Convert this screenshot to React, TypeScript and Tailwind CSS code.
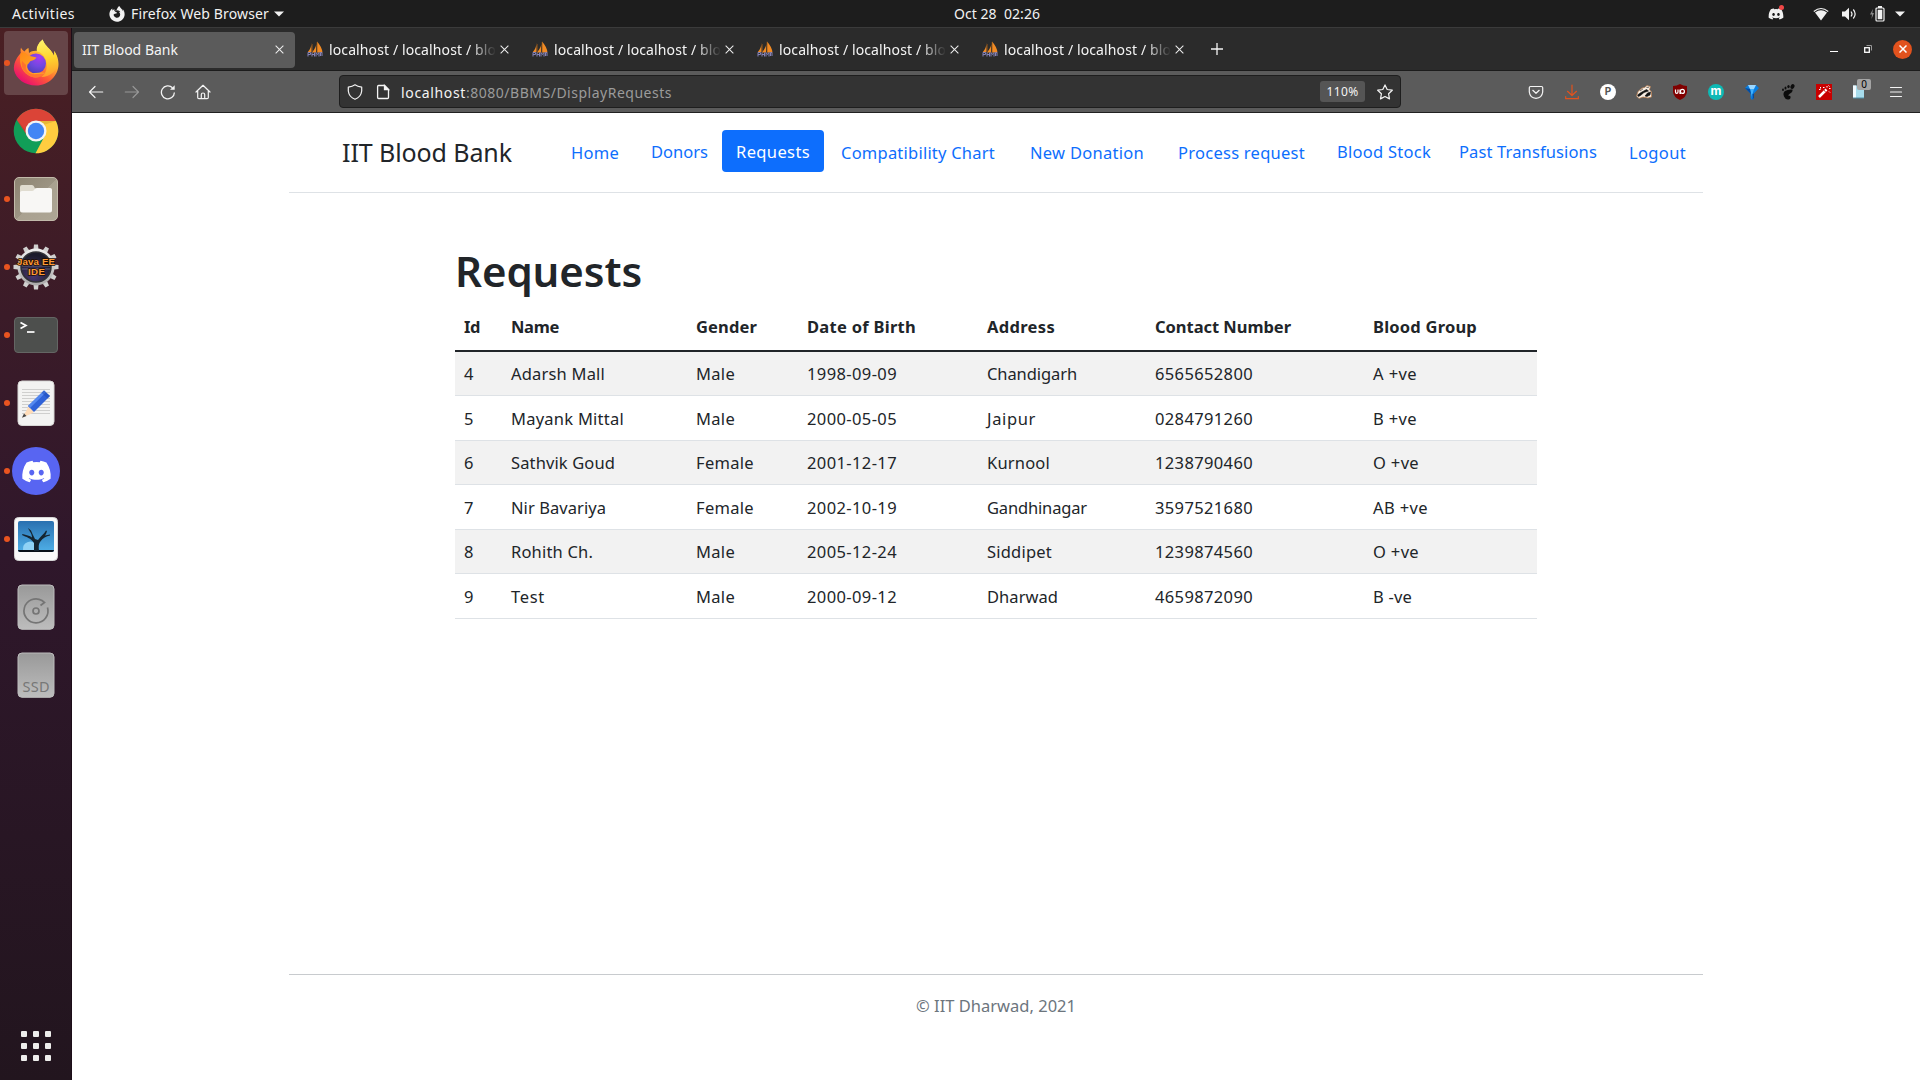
import { useLayoutEffect, useRef, useState } from "react";
import type { ReactNode } from "react";
import { FaDiscord, FaFirefoxBrowser } from "react-icons/fa";

/** Single-line label whose tracking is adjusted so that it fills a given width. */
function Fit({ w, children, className = "" }: { w: number; children: string; className?: string }) {
  const ref = useRef<HTMLSpanElement>(null);
  const [spacing, setSpacing] = useState(0);
  useLayoutEffect(() => {
    if (ref.current) {
      const natural = ref.current.getBoundingClientRect().width;
      setSpacing((w - natural) / children.length);
    }
  }, [w, children]);
  return (
    <span ref={ref} className={`inline-block whitespace-pre ${className}`} style={{ letterSpacing: spacing }}>
      {children}
    </span>
  );
}

/* ---------- dock icons ---------- */

const FirefoxIcon = () => (
  <svg viewBox="0 0 48 48" className="size-12">
    <defs>
      <linearGradient id="ffBody" x1="0.85" y1="0.1" x2="0.25" y2="0.95">
        <stop offset="0" stopColor="#fff44f" />
        <stop offset="0.35" stopColor="#ffb02e" />
        <stop offset="0.65" stopColor="#ff5a36" />
        <stop offset="1" stopColor="#e8106e" />
      </linearGradient>
      <radialGradient id="ffGlobe" cx="0.65" cy="0.2" r="0.9">
        <stop offset="0" stopColor="#a63cf0" />
        <stop offset="0.5" stopColor="#7148e0" />
        <stop offset="1" stopColor="#4a3fb5" />
      </radialGradient>
      <linearGradient id="ffTail" x1="0.5" y1="0" x2="0.6" y2="1">
        <stop offset="0" stopColor="#fff36a" />
        <stop offset="0.5" stopColor="#ffd52e" />
        <stop offset="1" stopColor="#ff9a2c" />
      </linearGradient>
      <linearGradient id="ffHead" x1="0" y1="0" x2="1" y2="1">
        <stop offset="0" stopColor="#ff8a16" />
        <stop offset="1" stopColor="#ffb52e" />
      </linearGradient>
    </defs>
    <path d="M9 8.500C8.300 11 8.600 13 8.800 14C3.500 20 1.500 25 2 31C4 40 13 46.500 24 46.500C37 46.500 46.500 36.500 46.500 25C46.500 19 44 14 42 12C42.500 14 42.300 16 42 17C40 12 37 10 35 7.500C32 4 31 2 30.800.500C26 4 25 9 25.300 12C22 11.500 19 12.500 17 14L16.500 9C14.500 10 13 11.500 12.500 12.500C10.500 11 9.500 10 9 8.500Z" fill="url(#ffBody)" />
    <path d="M30.800.500C26 4 24 9 25 12.500C29 13 33 17 34 22C36 29 34 35 29 38C39 38 46 31 45.500 22C45 17 43 13 42 12C42.500 14 42.300 16 42 17C40 12 37 10 35 7.500C32 4 31 2 30.800.500Z" fill="url(#ffTail)" />
    <circle cx="24" cy="24.500" r="10" fill="url(#ffGlobe)" />
    <path d="M8.800 14C12 13 14 14 16 16.500C18.500 17.500 22 17.500 24.500 18.500C24 20 21 21.500 18.500 22C17 24 16.500 25 15.500 25.500C14 31 19 35 23 34C27 33.500 30 33 33.500 34C29 39 21 40 16 36C9 32 6.500 22 8.800 14Z" fill="url(#ffHead)" />
    <path d="M14 26C13 32 18 36 25 35C29 34.300 31 35 33.500 34C29 39.500 20 40.500 13.500 34C10 30 9 26 10 22Z" fill="#ff5b34" opacity=".65" />
  </svg>
);

const ChromeIcon = () => (
  <svg viewBox="0 0 48 48" className="size-12">
    <circle cx="24" cy="24" r="22.300" fill="#119e58" />
    <path d="M4.700 12.850A22.300 22.300 0 0 1 43.300 12.850L43.800 14H24A10 10 0 0 0 15.340 29Z" fill="#db4437" />
    <path d="M24 14H43.900A22.300 22.300 0 0 1 23.500 46.300L32.660 29Z" fill="#ffcd40" />
    <path d="M24 14H43.900L33 17.500ZM15.300 29L4.900 12.600L14 24Z" fill="#000" opacity=".1" />
    <circle cx="24" cy="24" r="10.500" fill="#f4f4f4" />
    <circle cx="24" cy="24" r="8.200" fill="#4285f4" />
  </svg>
);

const FilesIcon = () => (
  <svg viewBox="0 0 48 48" className="size-12">
    <defs>
      <linearGradient id="fileBg" x1="0" y1="0" x2="1" y2="1">
        <stop offset="0" stopColor="#8c8371" />
        <stop offset="0.5" stopColor="#9c9483" />
        <stop offset="0.51" stopColor="#a9a190" />
        <stop offset="1" stopColor="#aea695" />
      </linearGradient>
    </defs>
    <rect x="2.500" y="2.500" width="43" height="43" rx="4.500" fill="url(#fileBg)" stroke="#c2baaa" />
    <path d="M8 12Q8 10 10 10H20Q21.500 10 22 11.500L23 13.500H38Q40 13.500 40 15.500V20H8Z" fill="#e0dcd0" />
    <path d="M8 17.500Q8 16 10 16H20Q21.500 16 22 15Q23 13 25 13H38Q40 13 40 15V35.500Q40 37.500 38 37.500H10Q8 37.500 8 35.500Z" fill="#f8f7f5" />
  </svg>
);

const teeth = [0, 30, 60, 90, 120, 150, 180, 210, 240, 270, 300, 330];
const EclipseIcon = () => (
  <svg viewBox="0 0 48 48" className="size-12">
    <defs>
      <linearGradient id="eclGear" x1="0" y1="0" x2="0" y2="1">
        <stop offset="0" stopColor="#eeeeee" />
        <stop offset="1" stopColor="#aaa9a9" />
      </linearGradient>
      <radialGradient id="eclCore" cx=".4" cy=".8" r=".7">
        <stop offset="0" stopColor="#47366f" />
        <stop offset="1" stopColor="#1b1b2b" />
      </radialGradient>
    </defs>
    {teeth.map((a) => (
      <path key={a} d="M21.300 8L22 1.500H26L26.700 8Z" fill="#d0d0cf" transform={`rotate(${a} 24 24)`} />
    ))}
    <circle cx="24" cy="24" r="18.500" fill="url(#eclGear)" />
    <circle cx="24" cy="24" r="15" fill="url(#eclCore)" stroke="#303036" strokeWidth="1.500" />
    <path d="M10 23H38M10 26H38" stroke="#6e6e85" strokeWidth=".8" />
    <g fontFamily="Liberation Sans" fontWeight="700" fontSize="9.700" textAnchor="middle" fill="#ff9a37" stroke="#1c0c00" strokeWidth="1.300" paintOrder="stroke">
      <text x="24" y="21.500" textLength="38">Java EE</text>
      <text x="24.500" y="31.500" textLength="17">IDE</text>
    </g>
  </svg>
);

const TerminalIcon = () => (
  <svg viewBox="0 0 48 48" className="size-12">
    <rect x="2.500" y="6.500" width="43" height="35" rx="3.500" fill="#4d4f4d" stroke="#646664" />
    <path d="M8.500 11.500L14 14.500L8.500 17.500" fill="none" stroke="#fff" strokeWidth="1.700" />
    <path d="M15 21H22.500" stroke="#fff" strokeWidth="1.700" />
  </svg>
);

const EditorIcon = () => (
  <svg viewBox="0 0 48 48" className="size-12">
    <rect x="6" y="2" width="36" height="44.500" rx="4" fill="#f3f3f2" stroke="#d7d7d5" />
    <path d="M10 10.500H38M10 13.500H38M10 16.500H38M10 19.500H38M10 22.500H38M10 25.500H38M10 28.500H38M10 31.500H38M10 34.500H38" stroke="#cfcfce" />
    <path d="M14.500 31.500L16.500 27L22 33L17.500 35.500L10 38.500Z" fill="#ffdcb8" />
    <path d="M10 38.700L12 34.500L14.500 37Z" fill="#444" />
    <path d="M16 27L32 11.500L38 17L22 33Z" fill="#2f62d8" />
    <path d="M16 27L32 11.500L34 13.200L18 29Z" fill="#5488ef" />
    <path d="M32 11.500L38 17L35.500 19.400L29.700 13.800Z" fill="#1c4bb8" opacity=".5" />
  </svg>
);

const DiscordIcon = () => (
  <div className="flex size-12 items-center justify-center rounded-full bg-[#5865f2] text-white">
    <FaDiscord className="size-[31px]" />
  </div>
);

const PhotoIcon = () => (
  <svg viewBox="0 0 48 48" className="size-12">
    <defs>
      <linearGradient id="sky" x1="0" y1="0" x2="0" y2="1">
        <stop offset="0" stopColor="#2a70b0" />
        <stop offset="1" stopColor="#4fb0e8" />
      </linearGradient>
    </defs>
    <rect x="2.500" y="2.500" width="43" height="43" rx="4" fill="#f9f9f9" stroke="#d6d6d6" />
    <rect x="6" y="6" width="36" height="31" rx="2" fill="url(#sky)" />
    <path d="M11 35A7.500 7.500 0 0 1 24 29V35Z" fill="#8fd2f5" />
    <path d="M6 35H42Q42 37 40 37H8Q6 37 6 35Z" fill="#081018" />
    <path d="M22 36V28C19 23 14 22 10 20L10.500 19C14 20 18 20.500 20 22.500C20 18 17 16 16 13L19 15.500L20.500 19L23 24L26 25C29 21 32 19 34 15.500L35 16C34.500 18 34 19 33 20.500L38 19.500V20.500C34 21 31 23 28 27C26.500 29 26.500 32 27 36Z" fill="#152430" />
  </svg>
);

const DiskIcon = ({ ssd }: { ssd?: boolean }) => (
  <svg viewBox="0 0 48 48" className="size-12">
    <defs>
      <linearGradient id="disk" x1="0" y1="0" x2="0" y2="1">
        <stop offset="0" stopColor="#999" />
        <stop offset="1" stopColor="#bdbdbd" />
      </linearGradient>
    </defs>
    <rect x="6" y="2" width="36" height="44.300" rx="4" fill="url(#disk)" stroke="#bcbcbc" />
    {ssd ? (
      <text x="24" y="40.500" fontFamily="Noto Sans" fontSize="14.500" textAnchor="middle" textLength="27" fill="#777">
        SSD
      </text>
    ) : (
      <g fill="none" stroke="#757575" strokeWidth="1.700">
        <path d="M35.500 24.500A12 12 0 1 1 30 17.500L32.500 19.500L28.500 22.500" />
        <circle cx="24" cy="28" r="3" />
      </g>
    )}
  </svg>
);

const dock: { icon: ReactNode; running?: boolean; active?: boolean }[] = [
  { icon: <FirefoxIcon />, running: true, active: true },
  { icon: <ChromeIcon /> },
  { icon: <FilesIcon />, running: true },
  { icon: <EclipseIcon />, running: true },
  { icon: <TerminalIcon />, running: true },
  { icon: <EditorIcon />, running: true },
  { icon: <DiscordIcon />, running: true },
  { icon: <PhotoIcon />, running: true },
  { icon: <DiskIcon /> },
  { icon: <DiskIcon ssd /> },
];

function Dock() {
  return (
    <aside className="flex w-[72px] shrink-0 flex-col items-start border-r border-[#1c0d18] bg-linear-to-b from-[#4a1f23] via-[#2f172b] to-[#22151e] pt-[3px] pl-1">
      <div className="flex flex-col gap-1">
        {dock.map((d, i) => (
          <div key={i} className={`relative flex size-16 items-center justify-center rounded-[4px] ${d.active ? "bg-[#664548]" : ""}`}>
            {d.running && <span className="absolute top-[29px] left-0 size-1.5 rounded-full bg-[#e95420]" />}
            {d.icon}
          </div>
        ))}
      </div>
      <div className="mt-auto mb-[19px] ml-[17px] grid grid-cols-3 gap-1.5">
        {teeth.slice(0, 9).map((k) => (
          <span key={k} className="size-1.5 rounded-[1px] bg-[#eeeeec]" />
        ))}
      </div>
    </aside>
  );
}

/* ---------- top bar ---------- */

const Caret = () => (
  <svg viewBox="0 0 10 6" className="h-1.5 w-2.5">
    <path d="M0 .5H10L5 5.500Z" fill="#f2f2f2" />
  </svg>
);

function TopBar() {
  return (
    <header className="grid h-7 grid-cols-3 items-center border-b border-[#3b3b3b] bg-[#1d1d1d] text-[14px] text-[#f2f2f2]">
      <div className="flex items-center pl-3">
        <Fit w={63}>Activities</Fit>
        <FaFirefoxBrowser className="ml-[34px] size-4" />
        <Fit w={138} className="ml-1.5">Firefox Web Browser</Fit>
        <span className="ml-[5px]"><Caret /></span>
      </div>
      <div className="flex pb-px pl-[314px]">
        <Fit w={86}>Oct 28  02:26</Fit>
      </div>
      <div className="flex items-center justify-end pr-[15px]">
        <span className="relative">
          <FaDiscord className="size-4" />
          <span className="absolute -top-px right-0 size-[5px] rounded-full bg-[#f04747]" />
        </span>
        <svg viewBox="0 0 16 14" className="ml-[29px] h-3.5 w-4">
          <path d="M.8 4.500Q8-1.500 15.200 4.500" fill="none" stroke="#f2f2f2" strokeWidth="1.200" />
          <path d="M2 5.500Q8 1 14 5.500L8 13.500Z" fill="#f2f2f2" />
        </svg>
        <svg viewBox="0 0 16 14" className="ml-3 h-3.5 w-4">
          <path d="M1 4.500H4L8 .7V13.300L4 9.500H1Z" fill="#f2f2f2" />
          <path d="M10 4.500Q12 7 10 9.500" fill="none" stroke="#f2f2f2" strokeWidth="1.200" />
          <path d="M12.300 2.500Q16 7 12.300 11.500" fill="none" stroke="#f2f2f2" strokeWidth="1.200" />
        </svg>
        <svg viewBox="0 0 16 16" className="ml-3 size-4">
          <path d="M4 3L1 8.500H3L2.500 13L5 7H3.300Z" fill="#8a8a8a" />
          <rect x="7" y="2" width="8" height="13" rx="1" fill="none" stroke="#f2f2f2" strokeWidth="1.200" />
          <path d="M9 0H13V2H9ZM8.700 3.700H13.300V13.300H8.700Z" fill="#f2f2f2" />
        </svg>
        <span className="ml-2.5 flex"><Caret /></span>
      </div>
    </header>
  );
}

/* ---------- browser chrome ---------- */

const Cross = () => (
  <svg viewBox="0 0 10 10" className="size-[9px]">
    <path d="M.7.700L9.300 9.300M9.300.700L.7 9.300" stroke="#eee" strokeWidth="1.150" />
  </svg>
);

const SailFavicon = () => (
  <svg viewBox="0 0 16 16" className="size-4 shrink-0">
    <path d="M4.500 1.500Q4.500 7 .8 11H4.500ZM9.500 0Q10 6 4.800 11.500H9ZM10 .5Q10 6 10 11.500H15.500Q15 6 10 .5Z" fill="#f08a24" />
    <path d="M5.500 3V10M10 1V11" stroke="#7d4a18" strokeWidth=".7" />
    <path d="M1 15.500V11.500H3.500V13.500H1M5 15.500V11.500M7.500 15.500V11.500M5 13.500H7.500M9 15.500V11.500L10.500 13.500L12 11.500V15.500M13.500 15V11.500H15V15" fill="none" stroke="#8583b8" />
  </svg>
);

function Tabs() {
  return (
    <div className="flex h-[43px] items-center border-b border-[#1c1c1c] bg-[#2b2b2b] pr-2 pl-0.5 text-[14px] text-[#f4f4f4]">
      <div className="mt-px flex h-9 w-[221px] items-center justify-between rounded-[4px] bg-[#5b5b5b] pr-[11px] pl-2">
        <Fit w={96}>IIT Blood Bank</Fit>
        <Cross />
      </div>
      <div className="ml-3 flex">
        {[0, 1, 2, 3].map((i) => (
          <div key={i} className="flex w-[225px] items-center">
            <SailFavicon />
            <div className="ml-1.5 w-[167px] mask-r-from-85% mask-r-to-100%">
              <Fit w={167}>localhost / localhost / blo</Fit>
            </div>
            <span className="ml-1"><Cross /></span>
          </div>
        ))}
      </div>
      <svg viewBox="0 0 12 12" className="ml-1 size-3">
        <path d="M6 0V12M0 6H12" stroke="#f4f4f4" strokeWidth="1.300" />
      </svg>
      <div className="ml-auto flex items-center">
        <span className="mt-1 h-px w-2 bg-white" />
        <svg viewBox="0 0 8 8" className="ml-[26px] size-2">
          <path d="M2.500.500H7.500V5.500" fill="none" stroke="#999" />
          <rect x=".7" y="2.700" width="4.600" height="4.600" fill="none" stroke="#fff" strokeWidth="1.300" />
        </svg>
        <span className="ml-[21px] flex size-[19px] items-center justify-center rounded-full bg-[#e2521d]">
          <svg viewBox="0 0 8 8" className="size-2">
            <path d="M.5.500L7.500 7.500M7.500.500L.5 7.500" stroke="#fff" strokeWidth="1.500" />
          </svg>
        </span>
      </div>
    </div>
  );
}

const Line = ({ d, className = "" }: { d: string; className?: string }) => (
  <svg viewBox="0 0 16 16" className={`size-4 shrink-0 ${className}`} fill="none" stroke="currentColor" strokeWidth="1.200" strokeLinecap="round" strokeLinejoin="round">
    <path d={d} />
  </svg>
);

function Extensions() {
  return (
    <div className="ml-auto flex items-center gap-5 pr-4">
      <Line d="M2.500 2.500H13.500Q14.700 2.500 14.700 3.700V8Q14 14 8 14.300Q2 14 1.300 8V3.700Q1.300 2.500 2.500 2.500ZM4.800 6.300L8 9.300L11.200 6.300" />
      <Line className="text-[#e2521d]" d="M8 1V11.300M3.500 7.300L8 11.500L12.500 7.300M1.700 12.500V14.700H14.300V12.500" />
      <span className="flex size-4 items-center justify-center rounded-full bg-white font-['Inter'] text-[10px] font-bold text-[#555]">P</span>
      <svg viewBox="0 0 16 16" className="size-4">
        <path d="M.5 12L2 7.500L6 4L8.500 3.500L11 1.500L14.500 2.500L13.500 5.500L15.500 8V13L12 14L7 13L3 14.500Z" fill="#f7eee4" stroke="#b87848" strokeWidth=".7" />
        <path d="M1.500 11L5 8.500L10.500 5.500L12.500 7L8 8.500L4.500 11.500L2.500 12.500ZM9 12L11.500 9L14.500 8L14 11L11 12.500ZM4 7L7 4.800M10.500 3.500L13 3.200" fill="#111" stroke="#111" strokeWidth=".6" />
      </svg>
      <svg viewBox="0 0 16 16" className="size-4">
        <path d="M8 0Q11 2 15 2V8Q14.500 13 8 16Q1.500 13 1 8V2Q5 2 8 0Z" fill="#800000" />
        <path d="M3.500 5.500V8Q3.500 9.300 4.700 9.300T6 8V5.500M8 5.500V9.300H9" fill="none" stroke="#fff" strokeWidth="1.200" />
        <circle cx="10.400" cy="7.400" r="2" fill="none" stroke="#fff" strokeWidth="1.200" />
      </svg>
      <span className="flex size-4 items-center justify-center rounded-full bg-[#0db9b5] pb-0.5 font-['Inter'] text-[12px] leading-3 font-bold text-white">m</span>
      <svg viewBox="0 0 16 16" className="size-4">
        <path d="M1 4L4 1H12L15 4L10 9.500V14L8 16L6.500 14V9.500Z" fill="#087de0" />
        <path d="M4 1H12L10 5H6Z" fill="#9ad7ff" />
        <path d="M6 5H10L8.500 10V15Z" fill="#3eb1ff" />
        <path d="M1 4L6 5L7 10ZM8.500 10L10 9.500V14L8.500 15.500Z" fill="#064a9c" />
      </svg>
      <svg viewBox="0 0 16 16" className="size-4" fill="#0c0c0c">
        <path d="M12.500 5.500Q8 5 5 7Q2.500 9 4 12.500Q5.500 16 8.500 15.500Q11 15 10.500 12.500Q10 11.500 8.500 12Q8 10.500 10 9.500Q13 8 12.500 5.500Z" />
        <ellipse cx="12.500" cy="2.500" rx="1.900" ry="2.500" transform="rotate(25 12.500 2.500)" />
        <ellipse cx="8.500" cy="2.600" rx="1.200" ry="1.700" />
        <ellipse cx="5.500" cy="3.900" rx="1" ry="1.500" />
        <ellipse cx="3" cy="5.800" rx=".9" ry="1.300" />
      </svg>
      <svg viewBox="0 0 16 16" className="size-4">
        <path d="M0 0H16V16H0Z" fill="#c80000" />
        <path d="M3 13L10.500 5.500" stroke="#fff" strokeWidth="2.500" />
        <path d="M8 6L9.500 8" stroke="#c80000" strokeWidth=".8" />
        <path d="M7 3.500H8.500M11 2V3.500M13 4.500H14.500M13 7.500L14 8.500M4.500 3V4.500M3 5.500H4.500M12.500 1.500L13.500 2.500" stroke="#fff" strokeWidth="1" />
      </svg>
      <span className="relative size-4">
        <svg viewBox="0 0 16 16" className="size-4">
          <path d="M1 1.500H12V14H1Z" fill="#a7dcec" />
          <path d="M1 1.500H4V14H1Z" fill="#f2fbff" />
          <path d="M1 14H12" stroke="#4e8fa8" />
        </svg>
        <span className="absolute -top-[5px] left-[5px] flex h-[11px] w-3.5 items-center justify-center rounded-[2px] bg-[#a4a4a4] text-[10px] text-black">0</span>
      </span>
      <Line className="text-[#f4f4f4]" d="M2.500 3.500H13.500M2.500 8H13.500M2.500 12.500H13.500" />
    </div>
  );
}

function Toolbar() {
  return (
    <div className="flex h-[42px] items-center border-b border-[#202020] bg-[#5b5b5b] pl-4 text-[#f4f4f4]">
      <Line d="M1.500 8H14.700M7 2.500L1.500 8L7 13.500" />
      <Line className="ml-5 text-[#979797]" d="M14.500 8H1.300M9 2.500L14.500 8L9 13.500" />
      <svg viewBox="0 0 16 16" className="ml-5 size-4" fill="none" stroke="currentColor" strokeWidth="1.300">
        <path d="M14.400 8.500A6.500 6.500 0 1 1 12.500 3.700" />
        <path d="M10 5.800H14.700V1.200Z" fill="currentColor" stroke="none" />
      </svg>
      <Line className="ml-[19px]" d="M1 8L8 1.300L15 8M2.700 7V13.500Q2.700 14.700 3.900 14.700H12.100Q13.300 14.700 13.300 13.500V7M6.300 14.500V10.500Q6.300 9 8 9T9.700 10.500V14.500" />
      <div className="ml-32 flex h-[33px] w-[1062px] items-center rounded-[4px] border border-[#1e1e1e] bg-[#333] pl-[7px] text-[14px]">
        <Line d="M8 .8Q10.500 2.500 14.700 3.200V7Q14 13 8 15.300Q2 13 1.300 7V3.200Q5.500 2.500 8 .8Z" />
        <svg viewBox="0 0 16 16" className="ml-3 size-4" fill="none" stroke="currentColor" strokeWidth="1.300">
          <path d="M3.600 1.500H9.500L13.500 5.500V13.500Q13.500 14.500 12.500 14.500H3.600Q2.600 14.500 2.600 13.500V2.500Q2.600 1.500 3.600 1.500Z" />
          <path d="M9.500 1.500V5.500H13.500Z" fill="currentColor" />
        </svg>
        <Fit w={65} className="ml-2.5 pt-0.5">localhost</Fit>
        <Fit w={206} className="pt-0.5 text-[#9b9b9b]">:8080/BBMS/DisplayRequests</Fit>
        <span className="ml-auto flex h-[21px] w-[45px] items-center justify-center rounded-[3px] bg-[#555] text-[12px]">
          <Fit w={32}>110%</Fit>
        </span>
        <Line className="mr-[7px] ml-3" d="M8 .9L10.200 5.500L15.300 6.200L11.600 9.800L12.500 14.900L8 12.500L3.500 14.900L4.400 9.800L.7 6.200L5.800 5.500Z" />
      </div>
      <Extensions />
    </div>
  );
}

/* ---------- page ---------- */

function Nav() {
  return (
    <nav className="ml-[217px] flex h-[80px] w-[1414px] items-start border-b border-[#dee2e6] pt-[17px] pl-[53px] text-[16.5px] text-[#0d6efd]">
      <div className="w-[229px] pt-[3px] text-[25px] leading-[38px] text-[#212529]">
        <Fit w={170}>IIT Blood Bank</Fit>
      </div>
      <div className="w-20 pt-[11px] leading-6"><Fit w={48}>Home</Fit></div>
      <div className="w-[71px] pt-2.5 leading-6"><Fit w={57}>Donors</Fit></div>
      <div className="h-[42px] w-[102px] rounded-[4px] bg-[#0d6efd] pt-2.5 pl-[14px] leading-6 text-white"><Fit w={74}>Requests</Fit></div>
      <div className="w-[189px] pt-[11px] pl-[17px] leading-6"><Fit w={154}>Compatibility Chart</Fit></div>
      <div className="w-36 pt-[11px] pl-[17px] leading-6"><Fit w={114}>New Donation</Fit></div>
      <div className="w-[163px] pt-[11px] pl-[21px] leading-6"><Fit w={127}>Process request</Fit></div>
      <div className="w-[122px] pt-2.5 pl-[17px] leading-6"><Fit w={94}>Blood Stock</Fit></div>
      <div className="w-[170px] pt-2.5 pl-[17px] leading-6"><Fit w={138}>Past Transfusions</Fit></div>
      <div className="pt-[11px] pl-[17px] leading-6"><Fit w={57}>Logout</Fit></div>
    </nav>
  );
}

const heads: [string, number, string][] = [
  ["Id", 16, "w-[47px]"],
  ["Name", 48, "w-[185px]"],
  ["Gender", 61, "w-[111px]"],
  ["Date of Birth", 109, "w-[180px]"],
  ["Address", 68, "w-[168px]"],
  ["Contact Number", 136, "w-[218px]"],
  ["Blood Group", 104, "w-[173px]"],
];

const rows: [string, number][][] = [
  [["4", 10], ["Adarsh Mall", 94], ["Male", 39], ["1998-09-09", 90], ["Chandigarh", 90], ["6565652800", 98], ["A +ve", 44]],
  [["5", 10], ["Mayank Mittal", 113], ["Male", 39], ["2000-05-05", 90], ["Jaipur", 49], ["0284791260", 98], ["B +ve", 44]],
  [["6", 10], ["Sathvik Goud", 104], ["Female", 58], ["2001-12-17", 90], ["Kurnool", 63], ["1238790460", 98], ["O +ve", 46]],
  [["7", 10], ["Nir Bavariya", 95], ["Female", 58], ["2002-10-19", 90], ["Gandhinagar", 100], ["3597521680", 98], ["AB +ve", 55]],
  [["8", 10], ["Rohith Ch.", 82], ["Male", 39], ["2005-12-24", 90], ["Siddipet", 65], ["1239874560", 98], ["O +ve", 46]],
  [["9", 10], ["Test", 34], ["Male", 39], ["2000-09-12", 90], ["Dharwad", 71], ["4659872090", 98], ["B -ve", 39]],
];

function RequestsTable() {
  return (
    <table className="w-[1082px] table-fixed border-collapse text-[16.5px] text-[#212529]">
      <thead>
        <tr className="h-[45px] border-b-2 border-[#212529]">
          {heads.map(([t, w, cls]) => (
            <th key={t} className={`pb-px pl-[9px] text-left font-bold ${cls}`}><Fit w={w}>{t}</Fit></th>
          ))}
        </tr>
      </thead>
      <tbody>
        {rows.map((r, i) => (
          <tr key={i} className="h-[44.600px] border-b border-[#dee2e6] odd:bg-[#f2f2f2]">
            {r.map(([t, w], j) => (
              <td key={j} className="pt-0.5 pl-[9px]"><Fit w={w}>{t}</Fit></td>
            ))}
          </tr>
        ))}
      </tbody>
    </table>
  );
}

export default function App() {
  return (
    <div className="flex h-[1080px] w-[1920px] flex-col overflow-hidden bg-white font-['Noto_Sans','Open_Sans',sans-serif]">
      <TopBar />
      <div className="flex min-h-0 flex-1">
        <Dock />
        <div className="flex min-w-0 flex-1 flex-col">
          <Tabs />
          <Toolbar />
          <Nav />
          <main className="ml-[383px] flex-1 pt-[51px]">
            <h1 className="mb-[9px] text-[42px] leading-[53px] font-semibold text-[#212529]"><Fit w={187}>Requests</Fit></h1>
            <RequestsTable />
          </main>
          <footer className="ml-[217px] h-[106px] w-[1414px] border-t border-[#c8cbce] pt-[19px] text-center text-[16.5px] leading-6 text-[#6c757d]">
            <Fit w={160}>© IIT Dharwad, 2021</Fit>
          </footer>
        </div>
      </div>
    </div>
  );
}
